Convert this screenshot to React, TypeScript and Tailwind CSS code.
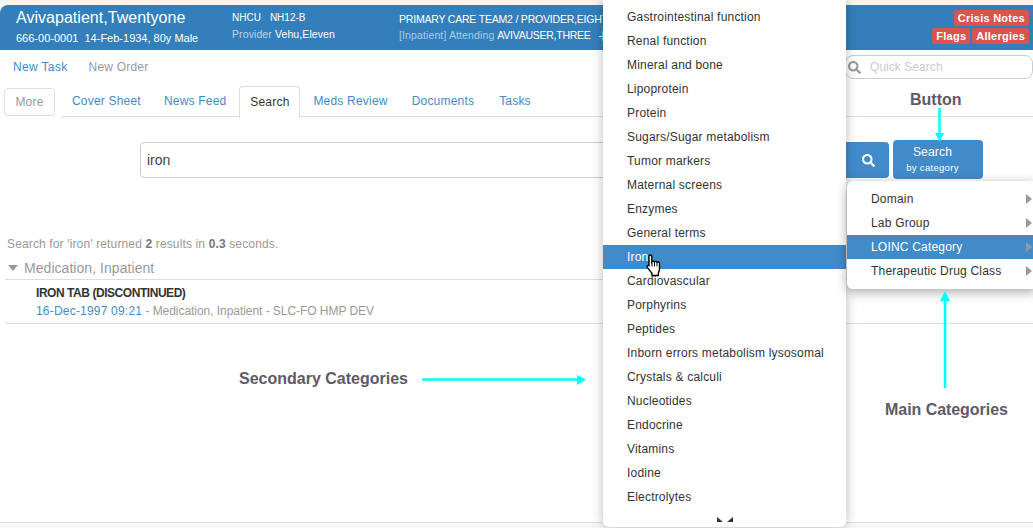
import { FaSearch } from "react-icons/fa";

const secondary = [
  "Gastrointestinal function",
  "Renal function",
  "Mineral and bone",
  "Lipoprotein",
  "Protein",
  "Sugars/Sugar metabolism",
  "Tumor markers",
  "Maternal screens",
  "Enzymes",
  "General terms",
  "Iron",
  "Cardiovascular",
  "Porphyrins",
  "Peptides",
  "Inborn errors metabolism lysosomal",
  "Crystals & calculi",
  "Nucleotides",
  "Endocrine",
  "Vitamins",
  "Iodine",
  "Electrolytes",
];

const main = ["Domain", "Lab Group", "LOINC Category", "Therapeutic Drug Class"];

function Arrow({ className, box, line, head }: { className: string; box: string; line: [number, number, number, number]; head: string }) {
  return (
    <svg className={className} viewBox={box}>
      <line x1={line[0]} y1={line[1]} x2={line[2]} y2={line[3]} stroke="#00ffff" strokeWidth="2.5" />
      <polygon points={head} fill="#00ffff" />
    </svg>
  );
}

export default function App() {
  return (
    <div className="relative h-[528px] w-[1033px] overflow-hidden bg-white font-['Liberation_Sans',Arial,sans-serif] text-[12px] tracking-[0.2px] text-[#333]">
      <div className="h-[5px] bg-[#f5f5f5]" />
      <header className="flex h-[45px] rounded-tl-[8px] bg-[#337fbc] tracking-normal text-white">
        <div className="w-[232px] shrink-0 pl-[16px]">
          <div className="mt-[3px] text-[16px] leading-[20px] tracking-[0.03px]">Avivapatient,Twentyone</div>
          <div className="mt-[3px] whitespace-pre text-[11px] leading-[14px]">666-00-0001  14-Feb-1934, 80y Male</div>
        </div>
        <div className="w-[167px] shrink-0 text-[10.5px]">
          <div className="mt-[6px] flex gap-[9px] text-[10px] leading-[14px]">
            <span>NHCU</span>
            <span>NH12-B</span>
          </div>
          <div className="mt-[2px] leading-[14px] tracking-[0.1px]"><span className="text-[#b9d4ea]">Provider</span> Vehu,Eleven</div>
        </div>
        <div className="flex-1 whitespace-pre text-[10.5px]">
          <div className="mt-[7px] leading-[14px] tracking-[-0.2px]">PRIMARY CARE TEAM2 / PROVIDER,EIGHT</div>
          <div className="mt-[2px] leading-[14px]"><span className="tracking-[0.12px] text-[#a9cbe6]">[Inpatient] Attending</span> <span className="tracking-[-0.25px]">AVIVAUSER,THREE   -[</span></div>
        </div>
        <div className="flex w-[110px] shrink-0 flex-col items-end gap-[2px] pr-[4px] pt-[5px] text-[11px] font-bold leading-[16px] tracking-[0.25px]">
          <span className="rounded-[3px] bg-[#d9534f] px-[4px]">Crisis Notes</span>
          <div className="flex gap-[2px]">
            <span className="rounded-[3px] bg-[#d9534f] px-[4px]">Flags</span>
            <span className="rounded-[3px] bg-[#d9534f] px-[4px]">Allergies</span>
          </div>
        </div>
      </header>

      <div className="flex h-[33px] items-center pl-[13px]">
        <span className="tracking-[0.35px] text-[#428bca]">New Task</span>
        <span className="ml-[21px] text-[#999]">New Order</span>
        <div className="ml-auto mt-[1px] flex h-[24px] w-[188px] items-center rounded-[8px] border border-[#ccc]">
          <FaSearch className="ml-[2px] text-[13px] text-[#999]" />
          <span className="ml-[9px] tracking-[0.05px] text-[#ccc]">Quick Search</span>
        </div>
      </div>

      <nav className="flex h-[34px] items-end pl-[4px]">
        <div className="mb-[1px] flex h-[28px] w-[51px] items-center justify-center rounded-[4px] border border-[#ddd] text-[#999]">More</div>
        <div className="ml-[6px] flex h-[31px] flex-1 items-center self-end border-b border-[#ddd] pl-[3px]">
          <span className="px-[8px] text-[#428bca]">Cover Sheet</span>
          <span className="ml-[7px] px-[8px] text-[#428bca]">News Feed</span>
          <span className="relative top-[1px] ml-[5px] flex h-[32px] w-[61px] items-center justify-center rounded-t-[4px] border border-b-0 border-[#ddd] bg-white pb-[2px] text-[#333]">Search</span>
          <span className="ml-[5px] px-[8px] text-[#428bca]">Meds Review</span>
          <span className="ml-[8px] px-[8px] text-[#428bca]">Documents</span>
          <span className="ml-[9px] px-[8px] text-[#428bca]">Tasks</span>
        </div>
      </nav>

      <div className="mt-[23px] flex items-start pl-[140px]">
        <div className="mt-[2px] flex h-[36px] w-[676px] items-center rounded-l-[4px] border border-[#ccc] pl-[6px] text-[14px] tracking-normal text-[#444]">iron</div>
        <div className="mt-[2px] flex h-[36px] w-[73px] items-center justify-end rounded-r-[4px] bg-[#428bca] pr-[14px] text-white">
          <FaSearch className="text-[13px]" />
        </div>
        <div className="ml-[4px] flex h-[39px] w-[90px] flex-col items-center rounded-[4px] bg-[#428bca] pr-[11px] pt-[5px] text-white">
          <span className="leading-[15px]">Search</span>
          <span className="text-[9.5px] leading-[15px] tracking-[0.3px]">by category</span>
        </div>
      </div>

      <p className="mt-[56px] pl-[7px] tracking-[0.14px] text-[#999]">
        Search for 'iron' returned <b className="text-[#777]">2</b> results in <b className="text-[#777]">0.3</b> seconds.
      </p>

      <div className="ml-[5px] mt-[6px] flex h-[21px] items-center border-b border-[#ddd] pb-[2px] text-[14px] tracking-[0.05px] text-[#999]">
        <span className="ml-[3px] mr-[6px] h-0 w-0 border-x-[5px] border-t-[6px] border-x-transparent border-t-[#999]" />
        Medication, Inpatient
      </div>
      <div className="ml-[5px] h-[44px] border-b border-[#ddd] pl-[31px] pt-[5px]">
        <div className="font-bold leading-[17px] tracking-[-0.45px] text-[#333]">IRON TAB (DISCONTINUED)</div>
        <div className="leading-[19px] tracking-[-0.05px] text-[#999]"><span className="tracking-[0.2px] text-[#428bca]">16-Dec-1997 09:21</span> - Medication, Inpatient - SLC-FO HMP DEV</div>
      </div>

      <div className="absolute inset-x-0 bottom-0 h-[6px] border-t border-[#ddd] bg-[#f7f7f7]" />

      {/* Secondary categories menu */}
      <div className="absolute left-[603px] top-0 h-[527px] w-[243px] rounded-b-[6px] bg-white pt-[5px] text-[#333] shadow-[0_0_12px_rgba(0,0,0,0.28)]">
        {secondary.map((s) => (
          <div key={s} className={"h-[24px] pl-[24px] leading-[24px] " + (s === "Iron" ? "bg-[#428bca] text-white" : "")}>{s}</div>
        ))}
        <svg className="absolute bottom-[5px] left-[114px] h-[5px] w-[16px]" viewBox="0 0 16 5">
          <polygon points="0,0 6,5 0,5" fill="#333" />
          <polygon points="16,0 10,5 16,5" fill="#333" />
        </svg>
      </div>

      {/* Main categories menu */}
      <div className="absolute left-[847px] top-[181px] h-[108px] w-[190px] rounded-[6px] bg-white pt-[6px] text-[#333] shadow-[0_3px_12px_rgba(0,0,0,0.35)]">
        {main.map((m) => (
          <div key={m} className={"relative h-[24px] pl-[24px] leading-[24px] " + (m === "LOINC Category" ? "bg-[#428bca] text-white" : "")}>
            {m}
            <span className="absolute left-[179px] top-[7px] h-0 w-0 border-y-[5px] border-l-[6px] border-y-transparent border-l-[#999]" />
          </div>
        ))}
      </div>

      {/* Hand cursor */}
      <svg className="absolute left-[646px] top-[254px] h-[23px] w-[17px]" viewBox="0 0 17 23">
        <path
          d="M3 1.5c1-1 2.500-.5 2.800.8V8c.6-1 2-1 2.600 0 .7-.9 2-.8 2.600.2.8-.7 2.300-.2 2.500 1.100v5.700c0 2-.7 3-1.200 4.200v2.300H6v-2.200C4.600 17.500 3 16 1.500 13.500.8 12 1.600 11 3 11.600V2.500z"
          fill="#fff"
          stroke="#000"
          strokeWidth="1.4"
        />
        <path d="M6 8.500v4M8.500 8v4.500M11 8.500v4" stroke="#000" strokeWidth="1" fill="none" />
      </svg>

      {/* Annotations */}
      <span className="absolute left-[910px] top-[91px] text-[16px] font-bold leading-[18px] tracking-normal text-[#5f5a66]">Button</span>
      <span className="absolute left-[239px] top-[370px] text-[16px] font-bold leading-[18px] tracking-normal text-[#5f5a66]">Secondary Categories</span>
      <span className="absolute left-[885px] top-[401px] text-[16px] font-bold leading-[18px] tracking-[-0.05px] text-[#5f5a66]">Main Categories</span>

      <Arrow className="absolute left-[933px] top-[108px] h-[34px] w-[12px]" box="0 0 12 34" line={[6.5, 0, 6.5, 26]} head="2,25 11,25 6.500,34" />
      <Arrow className="absolute left-[422px] top-[374px] h-[12px] w-[164px]" box="0 0 164 12" line={[0, 5.5, 156, 5.5]} head="155,1 164,5.500 155,11" />
      <Arrow className="absolute left-[939px] top-[291px] h-[97px] w-[12px]" box="0 0 12 97" line={[6, 8, 6, 97]} head="1,10 11,10 6,0" />
    </div>
  );
}
